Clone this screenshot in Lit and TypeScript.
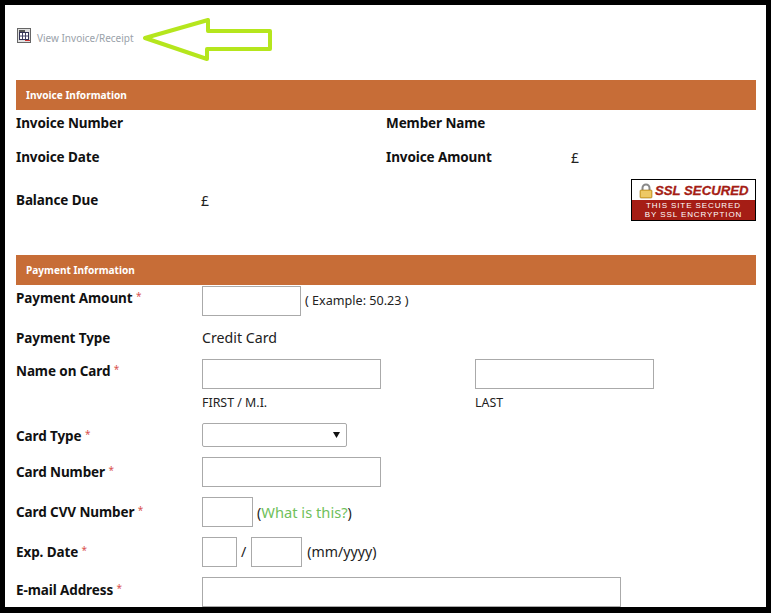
import { LitElement, html, css } from "lit";
import { customElement } from "lit/decorators.js";

@customElement("app-root")
export class AppRoot extends LitElement {
  static styles = css`
    :host { display: block; width: 771px; height: 613px; overflow: hidden; }
    * { box-sizing: border-box; }
    .frame {
      position: relative; width: 771px; height: 613px; background: #fff; overflow: hidden;
      border: solid #000; border-width: 5px 5px 6px 5px;
      padding: 0 10px 0 11px;
      font-family: "Noto Sans", "Open Sans", sans-serif; font-size: 14px; color: #222;
    }
    .viewlink { height: 75px; padding-top: 22px; display: flex; align-items: flex-start; gap: 6px; color: #9aa2aa; font-size: 10px; line-height: 22px; }
    .viewlink svg { margin: 1px 0 0 1px; flex: none; }
    .arrow { position: absolute; left: 130px; top: 6px; }
    .bar { height: 30px; background: #c76d37; color: #fff; font-weight: 700; font-size: 10.1px; line-height: 30px; padding-left: 10px; }
    .row { display: flex; align-items: center; }
    .label { width: 186px; flex: none; font-weight: 700; color: #111; font-size: 13.5px; white-space: nowrap; letter-spacing: -0.1px; }
    .second { width: 370px; flex: none; display: flex; align-items: center; }
    .second .label { width: 185px; margin: 0; }
    .val { color: #222; }
    .r1 { height: 26px; }
    .r2 { height: 42px; }
    .r3 { height: 44px; justify-content: flex-start; position: relative; }
    .r3 .label { width: 185px; }
    .r3 .fill { flex: 1; }
    .gapb { height: 33px; }
    .ssl { width: 125px; height: 42px; border: 1px solid #000; background: #fff; display: flex; flex-direction: column; }
    .ssl-top { height: 20px; flex: none; display: flex; align-items: center; padding: 2px 0 0 7px; gap: 2px; color: #a51d15; font: italic 700 13.2px/1 "Liberation Sans", sans-serif; white-space: nowrap; -webkit-text-stroke: 0.3px #a51d15; }
    .ssl-bot { flex: 1; background: #a51d15; color: #fff; font: 400 8px/9px "Liberation Sans", sans-serif; letter-spacing: 0.9px; text-align: center; padding-top: 1px; white-space: nowrap; }
    .f { display: flex; align-items: flex-start; }
    .f .label { line-height: 20px; padding-top: 0; }
    .req { color: #d9534f; font-weight: 400; font-size: 10px; vertical-align: 3px; }
    .input { height: 30px; border: 1px solid #aaa; background: #fff; flex: none; }
    .w99 { width: 99px; } .w179 { width: 179px; } .w51 { width: 51px; } .w35 { width: 35px; } .w419 { width: 419px; }
    .note { font-size: 12.6px; margin-left: 4px; line-height: 30px; color: #222; }
    .mid { font-size: 14.2px; line-height: 30px; }
    .sub { font-size: 12.4px; line-height: 16px; margin-top: 6px; color: #222; }
    .col { display: flex; flex-direction: column; }
    .select { width: 145px; height: 24px; border: 1px solid #aaa; border-radius: 2px; background: #fff; display: flex; align-items: center; justify-content: flex-end; padding-right: 6px; }
    .link { color: #6fbf5b; font-size: 14.7px; }
    .h39 { height: 39px; padding-top: 1px; }
    .h35 { height: 35px; align-items: center; padding-bottom: 7px; }
    .h64 { height: 64px; } .h34 { height: 34px; } .h40 { height: 40px; } .h30 { height: 30px; }
    .f .p1 { padding-top: 1px; } .f .p3 { padding-top: 3px; }
    .first { width: 273px; }
    .plus { margin-left: 4px; }
    .slash { margin: 0 5px 0 4px; }
    .plus5 { margin-left: 5px; }
  `;

  req() { return html` <span class="req">*</span>`; }

  render() {
    return html`
      <div class="frame">
        <div class="viewlink">
          <svg width="14" height="15" viewBox="0 0 14 15">
            <rect x="0.5" y="0.5" width="13" height="14" fill="#e0e0e0" stroke="#666"/>
            <rect x="2" y="2" width="6" height="2" fill="#555"/>
            <rect x="2.5" y="4.5" width="9" height="7" fill="#fff" stroke="#335" stroke-width="1"/>
            <path d="M5.5 5v6M8.5 5v6M3 8h8" stroke="#446" stroke-width="1"/>
            <rect x="8" y="12" width="5" height="1" fill="#c33"/>
          </svg>
          <span>View Invoice/Receipt</span>
        </div>
        <svg class="arrow" width="140" height="52" viewBox="0 0 140 52">
          <path d="M10 27 L73 9 V20 L135 20 V38 L72 38 V48 Z" fill="#fff" stroke="#b5e61d" stroke-width="4" stroke-linejoin="round"/>
        </svg>
        <div class="bar">Invoice Information</div>
        <div class="row r1">
          <div class="second"><span class="label">Invoice Number</span></div>
          <div class="second"><span class="label">Member Name</span></div>
        </div>
        <div class="row r2">
          <div class="second"><span class="label">Invoice Date</span></div>
          <div class="second"><span class="label">Invoice Amount</span><span class="val">£</span></div>
        </div>
        <div class="row r3">
          <span class="label">Balance Due</span><span class="val">£</span>
          <span class="fill"></span>
          <div class="ssl">
            <div class="ssl-top">
              <svg width="14" height="16" viewBox="0 0 14 16">
                <path d="M3.5 8V5a3.5 3.5 0 0 1 7 0v3" fill="none" stroke="#888" stroke-width="2"/>
                <rect x="1" y="7" width="12" height="8" rx="1" fill="#e8b840" stroke="#a07820" stroke-width="0.6"/>
                <path d="M2 9h10M2 11h10M2 13h10" stroke="#f6e3a0" stroke-width="0.8"/>
              </svg>
              <span>SSL SECURED</span>
            </div>
            <div class="ssl-bot">THIS SITE SECURED<br />BY SSL ENCRYPTION</div>
          </div>
        </div>
        <div class="gapb"></div>
        <div class="bar">Payment Information</div>
        <div class="f h39">
          <span class="label">Payment Amount${this.req()}</span>
          <div class="input w99"></div><span class="note">( Example: 50.23 )</span>
        </div>
        <div class="f h35">
          <span class="label">Payment Type</span><span class="mid">Credit Card</span>
        </div>
        <div class="f h64">
          <span class="label">Name on Card${this.req()}</span>
          <div class="col first"><div class="input w179"></div><div class="sub">FIRST / M.I.</div></div>
          <div class="col"><div class="input w179"></div><div class="sub">LAST</div></div>
        </div>
        <div class="f h34">
          <span class="label p1">Card Type${this.req()}</span>
          <div class="select"><svg width="7" height="6" viewBox="0 0 7 6"><path d="M0 0h7L3.5 6z" fill="#111"/></svg></div>
        </div>
        <div class="f h40">
          <span class="label p3">Card Number${this.req()}</span>
          <div class="input w179"></div>
        </div>
        <div class="f h40">
          <span class="label p3">Card CVV Number${this.req()}</span>
          <div class="input w51"></div><span class="mid plus">(<span class="link">What is this?</span>)</span>
        </div>
        <div class="f h40">
          <span class="label p3">Exp. Date${this.req()}</span>
          <div class="input w35"></div><span class="mid slash">/</span><div class="input w51"></div><span class="mid plus5">(mm/yyyy)</span>
        </div>
        <div class="f h30">
          <span class="label p1">E-mail Address${this.req()}</span>
          <div class="input w419"></div>
        </div>
      </div>
    `;
  }
}
